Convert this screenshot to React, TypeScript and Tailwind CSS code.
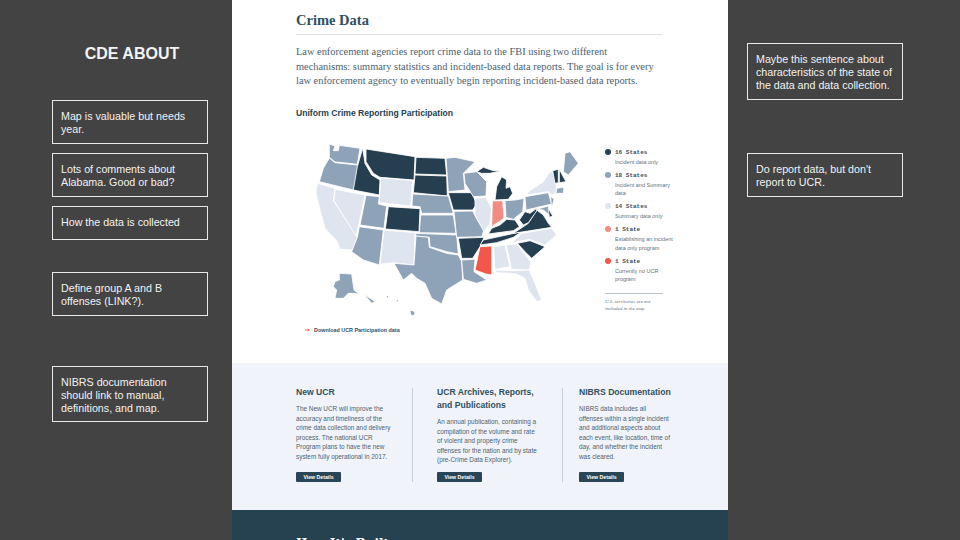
const navy = '#263f50';
const mid = '#8fa3b8';
const light = '#dfe5ee';

// state shapes, traced at 3x the size they are shown
const states: [string, string][] = [
  [mid, '148,42 165,48 160,62 175,62 178,46 240,55 232,103 190,98 165,96 148,82'],
  [mid, '148,84 165,98 232,105 238,125 220,180 118,155 130,115'],
  [light, '112,160 165,175 160,212 232,320 218,360 180,358 172,335 135,295 120,240 108,190'],
  [light, '165,178 255,195 235,290 228,318 162,212'],
  [navy, '248,55 255,100 275,135 300,150 298,195 220,180 232,110'],
  [navy, '258,57 405,80 402,150 300,142 280,130 258,95'],
  [light, '302,143 398,152 392,228 298,218'],
  [mid, '258,196 298,200 295,222 320,228 312,295 240,285'],
  [mid, '238,290 310,300 298,405 250,390 215,365 232,322'],
  [navy, '325,230 420,236 417,305 316,297'],
  [light, '312,300 405,308 402,405 340,398 300,403'],
  [navy, '408,82 495,85 500,135 405,132'],
  [navy, '405,135 500,138 502,198 400,188'],
  [mid, '398,192 505,198 520,250 425,250 420,230 396,228'],
  [mid, '422,255 520,255 528,310 418,308'],
  [mid, '408,310 530,315 535,372 500,365 450,350 448,322 406,318'],
  [mid, '408,318 445,322 448,352 500,370 535,375 545,395 548,450 500,480 485,522 455,505 435,460 410,445 395,430 370,450 342,400 402,405'],
  [mid, '498,85 525,82 585,95 550,130 555,180 505,185'],
  [navy, '505,188 575,188 590,222 578,240 520,240'],
  [mid, '522,244 578,243 595,275 612,300 605,320 530,322'],
  [navy, '535,325 612,322 600,350 578,385 545,385'],
  [mid, '545,390 585,388 582,425 620,450 590,460 550,448'],
  [mid, '552,130 590,125 620,155 618,198 580,200 555,160'],
  [light, '585,205 618,202 635,235 630,280 612,305 585,255'],
  ['#f28b82', '637,213 668,212 672,265 635,290'],
  [navy, '590,125 610,112 640,122 665,122 630,130 605,130'],
  [navy, '645,210 650,170 665,140 680,150 678,175 690,170 698,190 685,208'],
  [mid, '675,212 705,210 732,205 728,245 700,268 678,262'],
  [navy, '625,312 635,295 660,285 680,268 705,270 718,290 700,302'],
  [navy, '610,330 725,305 700,322 650,338 600,345'],
  ['#f4574a', '600,350 635,348 635,435 618,432 585,420'],
  [light, '640,350 675,345 690,410 645,418'],
  [light, '678,345 710,342 752,395 748,420 695,418'],
  [light, '645,420 695,422 748,420 765,460 785,510 770,515 745,480 735,445 710,432 690,430 650,428'],
  [light, '725,310 815,295 830,315 795,345 748,328 712,335 695,340'],
  [navy, '712,340 750,332 795,350 755,385 735,365'],
  [navy, '715,300 745,280 770,240 790,255 805,280 815,292 700,310'],
  [navy, '718,270 735,245 750,250 770,235 770,243 745,278 730,285'],
  [mid, '735,200 805,188 815,222 738,240'],
  [light, '745,185 790,155 810,125 830,130 828,190 815,195 805,185 740,195'],
  [navy, '818,122 835,118 835,158 825,160'],
  [navy, '838,118 858,155 838,158'],
  [mid, '855,70 870,65 895,100 865,135 850,125'],
  [mid, '830,175 852,172 850,190 828,190'],
  [mid, '812,198 822,208 815,235'],
  [mid, '770,238 805,228 812,258 790,240'],
  [navy, '805,235 818,258 808,262'],
  [mid, '178,430 215,432 222,480 240,495 225,490 205,490 190,505 165,505 170,480 160,470 165,455 178,450'],
  [mid, '252,492 285,515 275,520'],
  [mid, '390,540 405,545 402,557 392,555'],
];

const legend = [
  { color: navy, count: '16 States', label: 'Incident data only' },
  { color: mid, count: '18 States', label: 'Incident and Summary data' },
  { color: light, count: '14 States', label: 'Summary data only' },
  { color: '#f28b82', count: '1 State', label: 'Establishing an incident data only program' },
  { color: '#f4574a', count: '1 State', label: 'Currently no UCR program' },
];

const cards = [
  {
    title: 'New UCR',
    body: 'The New UCR will improve the accuracy and timeliness of the crime data collection and delivery process. The national UCR Program plans to have the new system fully operational in 2017.',
    box: 'w-[116px]',
    bodyWidth: 'w-[96px]',
  },
  {
    title: 'UCR Archives, Reports, and Publications',
    body: 'An annual publication, containing a compilation of the volume and rate of violent and property crime offenses for the nation and by state (pre-Crime Data Explorer).',
    box: 'w-[150px] border-l border-[#c9d0d6] pl-[24px]',
    bodyWidth: 'w-[100px]',
  },
  {
    title: 'NIBRS Documentation',
    body: 'NIBRS data includes all offenses within a single incident and additional aspects about each event, like location, time of day, and whether the incident was cleared.',
    box: 'w-[120px] border-l border-[#c9d0d6] pl-[16px]',
    bodyWidth: 'w-[91px]',
  },
];

function Note({ text, className }: { text: string; className: string }) {
  return (
    <div className={`w-[156px] border border-[#e8e8e8] px-2 pt-[9px] text-[10.7px] leading-[13px] text-[#f2f2f2] ${className}`}>
      {text}
    </div>
  );
}

export default function App() {
  return (
    <div className="flex h-[540px] w-[960px] overflow-hidden bg-[#434343] font-['Liberation_Sans',Arial,sans-serif]">
      {/* Left notes */}
      <div className="flex w-[232px] shrink-0 flex-col pl-[52px]">
        <h1 className="mt-[45px] w-[160px] text-center text-[16px] leading-[18px] font-bold text-[#f3f3f3]">CDE ABOUT</h1>
        <Note className="mt-[37px] h-[44px]" text="Map is valuable but needs year." />
        <Note className="mt-[9px] h-[44px]" text="Lots of comments about Alabama. Good or bad?" />
        <Note className="mt-[9px] h-[34px]" text="How the data is collected" />
        <Note className="mt-[32px] h-[44px]" text="Define group A and B offenses (LINK?)." />
        <Note className="mt-[50px] h-[56px]" text="NIBRS documentation should link to manual, definitions, and map." />
      </div>

      {/* Page */}
      <div className="flex w-[496px] shrink-0 flex-col bg-white">
        <div className="h-[363px] shrink-0 pt-[12px] pl-[64px]">
          <h2 className="w-[366px] border-b border-[#dfe3e8] pb-[6px] font-['Liberation_Serif',serif] text-[14.5px] leading-[16px] font-bold text-[#30505f]">
            Crime Data
          </h2>
          <p className="mt-[10px] w-[364px] font-['Liberation_Serif',serif] text-[10.4px] leading-[14.5px] text-[#4d6270]">
            Law enforcement agencies report crime data to the FBI using two different mechanisms: summary statistics and
            incident-based data reports. The goal is for every law enforcement agency to eventually begin reporting
            incident-based data reports.
          </p>
          <h3 className="mt-[18px] text-[8.6px] leading-[12px] font-bold text-[#263f50]">Uniform Crime Reporting Participation</h3>

          <div className="mt-[11px] flex">
            <div className="relative ml-[-16px] h-[210px] w-[310px] shrink-0">
              <svg viewBox="0 0 930 630" className="h-[210px] w-[310px]">
                {states.map(([fill, points]) => (
                  <polygon key={points} points={points} fill={fill} stroke="#ffffff" strokeWidth="2.5" strokeLinejoin="round" />
                ))}
                <circle cx="322" cy="500" r="2" fill={mid} />
                <circle cx="352" cy="512" r="2" fill={mid} />
              </svg>
              <div className="absolute top-[194px] left-[25px] flex items-center gap-[4px] text-[5.4px] leading-[12px] font-bold text-[#38505f]">
                <svg viewBox="0 0 5 4" className="h-[4px] w-[5px]">
                  <path d="M0 2h4M2.5 0.8 4.5 2 2.5 3.2" fill="none" stroke="#f4574a" strokeWidth="0.8" />
                </svg>
                Download UCR Participation data
              </div>
            </div>
            <div className="ml-[15px] w-[68px] shrink-0 pt-[18px] pl-[10px]">
              {legend.map((item) => (
                <div key={item.label} className="relative mb-[4.5px]">
                  <span className="absolute top-[1px] left-[-10px] h-[6px] w-[6px] rounded-full" style={{ backgroundColor: item.color }} />
                  <div className="font-['Liberation_Mono',monospace] text-[6px] leading-[9px] font-bold text-[#38505f]">{item.count}</div>
                  <div className="mt-[1px] text-[5.5px] leading-[8.5px] text-[#5f7280]">{item.label}</div>
                </div>
              ))}
              <p className="mt-[9px] ml-[-10px] w-[58px] border-t border-[#b8c2cc] pt-[4px] font-['Liberation_Serif',serif] text-[5px] leading-[7.5px] text-[#5f7280] italic">
                U.S. territories are not included in the map
              </p>
            </div>
          </div>
        </div>

        {/* Cards */}
        <div className="flex h-[147px] shrink-0 items-start bg-[#f0f4fa] pt-[25px] pl-[64px]">
          {cards.map((card) => (
            <div key={card.title} className={`flex h-[94px] shrink-0 flex-col ${card.box}`}>
              <h4 className="mt-[-2px] w-[104px] text-[8.6px] leading-[13px] font-bold text-[#30505f]">{card.title}</h4>
              <p className={`mt-[5px] text-[6.4px] leading-[9.5px] text-[#4d6270] ${card.bodyWidth}`}>{card.body}</p>
              <button className="mt-auto h-[10px] w-[45px] rounded-[1px] bg-[#2a4656] text-[5.2px] leading-[10px] font-bold text-white">View Details</button>
            </div>
          ))}
        </div>

        <div className="h-[30px] shrink-0 overflow-hidden bg-[#264250] pt-[26px] pl-[64px]">
          <div className="font-['DejaVu_Serif',serif] text-[12px] leading-[16px] font-bold text-white">How It's Built</div>
        </div>
      </div>

      {/* Right notes */}
      <div className="flex flex-col pl-[19px]">
        <Note className="mt-[43px] h-[57px]" text="Maybe this sentence about characteristics of the state of the data and data collection." />
        <Note className="mt-[53px] h-[44px]" text="Do report data, but don't report to UCR." />
      </div>
    </div>
  );
}
